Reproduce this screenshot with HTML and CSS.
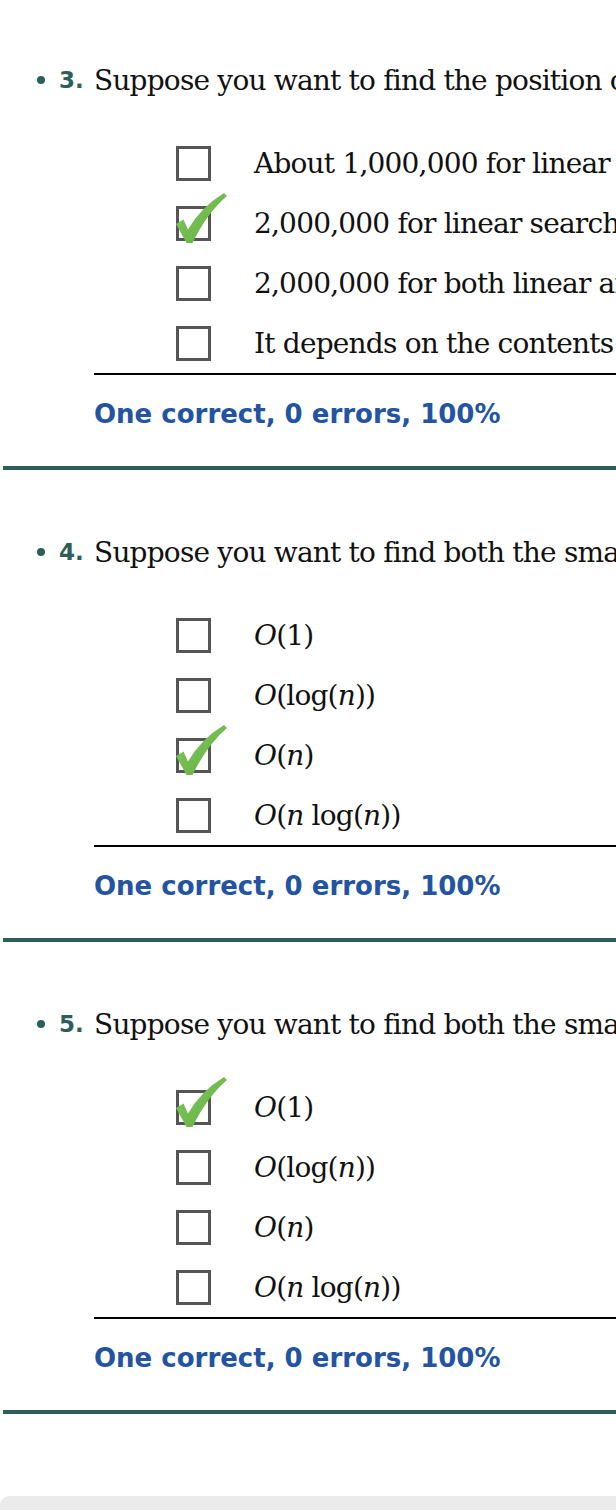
FILE: index.html
```html
<!DOCTYPE html>
<html>
<head>
<meta charset="utf-8">
<link rel="stylesheet" href="styles.css">
</head>
<body>
<svg width="0" height="0" class="defs">
  <defs>
    <linearGradient id="chk" x1="0" y1="0" x2="1" y2="1">
      <stop offset="0" stop-color="#86c961"/>
      <stop offset="1" stop-color="#5fae3f"/>
    </linearGradient>
    <symbol id="check" viewBox="0 0 52 52">
      <path d="M0,32 L7.5,27.5 L12,37.5 Q25,15 48,1 L51,4 Q31,21 16.5,51 L10.5,51 Z" fill="url(#chk)"/>
    </symbol>
  </defs>
</svg>
<div class="quiz">
  <section class="question">
    <div class="head">
      <span class="bullet"></span>
      <span class="num">3.</span>
      <span class="qtext">Suppose you want to find the position of a value in a sorted list of 1,000,000 items.</span>
    </div>
    <div class="options">
      <div class="opt"><span class="box"></span><span class="otext">About 1,000,000 for linear search, 20 for binary search</span></div>
      <div class="opt"><span class="box checked"><svg class="tick"><use href="#check"/></svg></span><span class="otext">2,000,000 for linear search, 40 for binary search</span></div>
      <div class="opt"><span class="box"></span><span class="otext">2,000,000 for both linear and binary search</span></div>
      <div class="opt"><span class="box"></span><span class="otext">It depends on the contents of the list</span></div>
    </div>
    <div class="feedback">One correct, 0 errors, 100%</div>
  </section>

  <section class="question">
    <div class="head">
      <span class="bullet"></span>
      <span class="num">4.</span>
      <span class="qtext">Suppose you want to find both the smallest and the largest value in an unsorted list.</span>
    </div>
    <div class="options">
      <div class="opt"><span class="box"></span><span class="otext"><i>O</i>(1)</span></div>
      <div class="opt"><span class="box"></span><span class="otext"><i>O</i>(log(<i>n</i>))</span></div>
      <div class="opt"><span class="box checked"><svg class="tick"><use href="#check"/></svg></span><span class="otext"><i>O</i>(<i>n</i>)</span></div>
      <div class="opt"><span class="box"></span><span class="otext"><i>O</i>(<i>n</i> log(<i>n</i>))</span></div>
    </div>
    <div class="feedback">One correct, 0 errors, 100%</div>
  </section>

  <section class="question">
    <div class="head">
      <span class="bullet"></span>
      <span class="num">5.</span>
      <span class="qtext">Suppose you want to find both the smallest and the largest value in a sorted list.</span>
    </div>
    <div class="options">
      <div class="opt"><span class="box checked"><svg class="tick"><use href="#check"/></svg></span><span class="otext"><i>O</i>(1)</span></div>
      <div class="opt"><span class="box"></span><span class="otext"><i>O</i>(log(<i>n</i>))</span></div>
      <div class="opt"><span class="box"></span><span class="otext"><i>O</i>(<i>n</i>)</span></div>
      <div class="opt"><span class="box"></span><span class="otext"><i>O</i>(<i>n</i> log(<i>n</i>))</span></div>
    </div>
    <div class="feedback">One correct, 0 errors, 100%</div>
  </section>
  <div class="bottom-space"></div>
  <div class="panel"></div>
</div>
</body>
</html>
```

FILE: styles.css
```css
html, body {
  margin: 0;
  padding: 0;
  background: #ffffff;
  overflow: hidden;
}
body {
  width: 616px;
  height: 1510px;
  font-family: "DejaVu Serif", "Liberation Serif", serif;
  color: #111;
}
.defs {
  position: absolute;
  width: 0;
  height: 0;
}
.quiz {
  margin-top: -2px;
}
.question {
  margin-left: 3px;
  border-bottom: 4px solid #2c5f5a;
  padding-top: 62px;
  height: 406px;
  display: flex;
  flex-direction: column;
}
.head {
  height: 40px;
  display: flex;
  align-items: center;
  white-space: nowrap;
}
.bullet {
  flex: none;
  width: 8px;
  height: 8px;
  border-radius: 50%;
  background: #2c5f5a;
  margin-left: 34px;
  margin-right: 14px;
}
.num {
  flex: none;
  width: 35px;
  font-family: "DejaVu Sans", sans-serif;
  font-weight: bold;
  font-size: 23px;
  color: #2c5f5a;
}
.qtext {
  font-size: 28px;
  letter-spacing: -0.8px;
}
.options {
  margin-top: 33px;
  margin-left: 91px;
  border-bottom: 2px solid #000;
  display: flex;
  flex-direction: column;
}
.opt {
  height: 60px;
  display: flex;
  align-items: center;
  white-space: nowrap;
}
.box {
  flex: none;
  position: relative;
  box-sizing: border-box;
  width: 35px;
  height: 35px;
  border: 3px solid #555555;
  margin-left: 82px;
  margin-right: 43px;
}
.tick {
  position: absolute;
  left: -3px;
  top: -17px;
  width: 52px;
  height: 52px;
}
.otext {
  font-size: 28px;
  letter-spacing: -0.8px;
}
.feedback {
  margin-left: 91px;
  margin-top: 24px;
  font-family: "DejaVu Sans", sans-serif;
  font-weight: bold;
  font-size: 26px;
  color: #2353a3;
  white-space: nowrap;
}
.bottom-space {
  height: 82px;
}
.panel {
  height: 40px;
  background: #ebebeb;
  border-top-left-radius: 9px;
}
```
